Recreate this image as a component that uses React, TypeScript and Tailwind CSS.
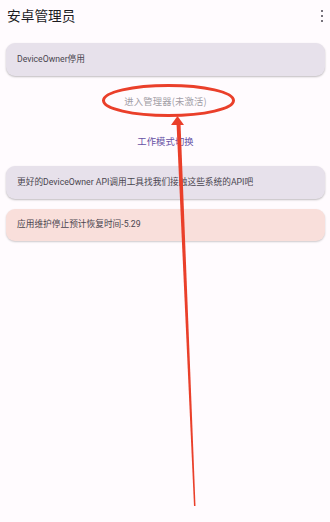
import React from "react";

export default function App() {
  const font = { fontFamily: 'Roboto, "Noto Sans CJK SC", sans-serif' };
  const cjk = { fontFamily: '"Noto Sans CJK SC", sans-serif' };
  return (
    <div className="relative w-[330px] h-[522px] bg-[#fffbfe] overflow-hidden" style={font}>
      <div className="flex items-center justify-between h-[31px] pl-[7px] pr-[6px]">
        <span className="text-[13.7px] leading-none text-[#1c1b1f] mt-[1px]" style={cjk}>安卓管理员</span>
        <div className="flex flex-col gap-[2.5px] mr-[1px] mt-[1px]">
          <span className="block w-[2.5px] h-[2.5px] bg-[#49454f] rounded-full" />
          <span className="block w-[2.5px] h-[2.5px] bg-[#49454f] rounded-full" />
          <span className="block w-[2.5px] h-[2.5px] bg-[#49454f] rounded-full" />
        </div>
      </div>
      <div className="flex flex-col ml-[6px] mr-[5px] mt-[12px]">
        <div className="h-[33px] rounded-[9px] bg-[#e7e1eb] shadow-[0_1px_2px_rgba(0,0,0,0.25)] flex items-center pl-[11px] text-[8.7px] text-[#49454f]">
          DeviceOwner停用
        </div>
        <div className="h-[51px] flex items-center justify-center text-[9.3px] tracking-[0.2px] text-[#a29ea6]" style={cjk}>
          进入管理器(未激活)
        </div>
        <div className="h-[29px] flex items-center justify-center text-[9.3px] tracking-[0.1px] text-[#6750a4]" style={cjk}>
          工作模式切换
        </div>
        <div className="h-[10px]" />
        <div className="h-[33px] rounded-[9px] bg-[#e7e1eb] shadow-[0_1px_2px_rgba(0,0,0,0.25)] flex items-center pl-[11px] text-[8.7px] text-[#49454f]">
          更好的DeviceOwner API调用工具找我们接触这些系统的API吧
        </div>
        <div className="h-[10px]" />
        <div className="h-[32px] rounded-[9px] bg-[#f9dfdb] shadow-[0_1px_2px_rgba(0,0,0,0.2)] flex items-center pl-[11px] text-[8.7px] text-[#49454f]">
          应用维护停止预计恢复时间-5.29
        </div>
      </div>
      <svg className="absolute left-0 top-0 pointer-events-none" width="330" height="522" viewBox="0 0 330 522">
        <ellipse cx="168.5" cy="100.5" rx="65" ry="15" fill="none" stroke="#ea3f2a" strokeWidth="3" />
        <polygon points="176.5,123 180.5,123 195.5,506 194,506" fill="#ea3f2a" />
        <polygon points="177.5,116 171,125 184,125" fill="#ea3f2a" />
      </svg>
    </div>
  );
}
